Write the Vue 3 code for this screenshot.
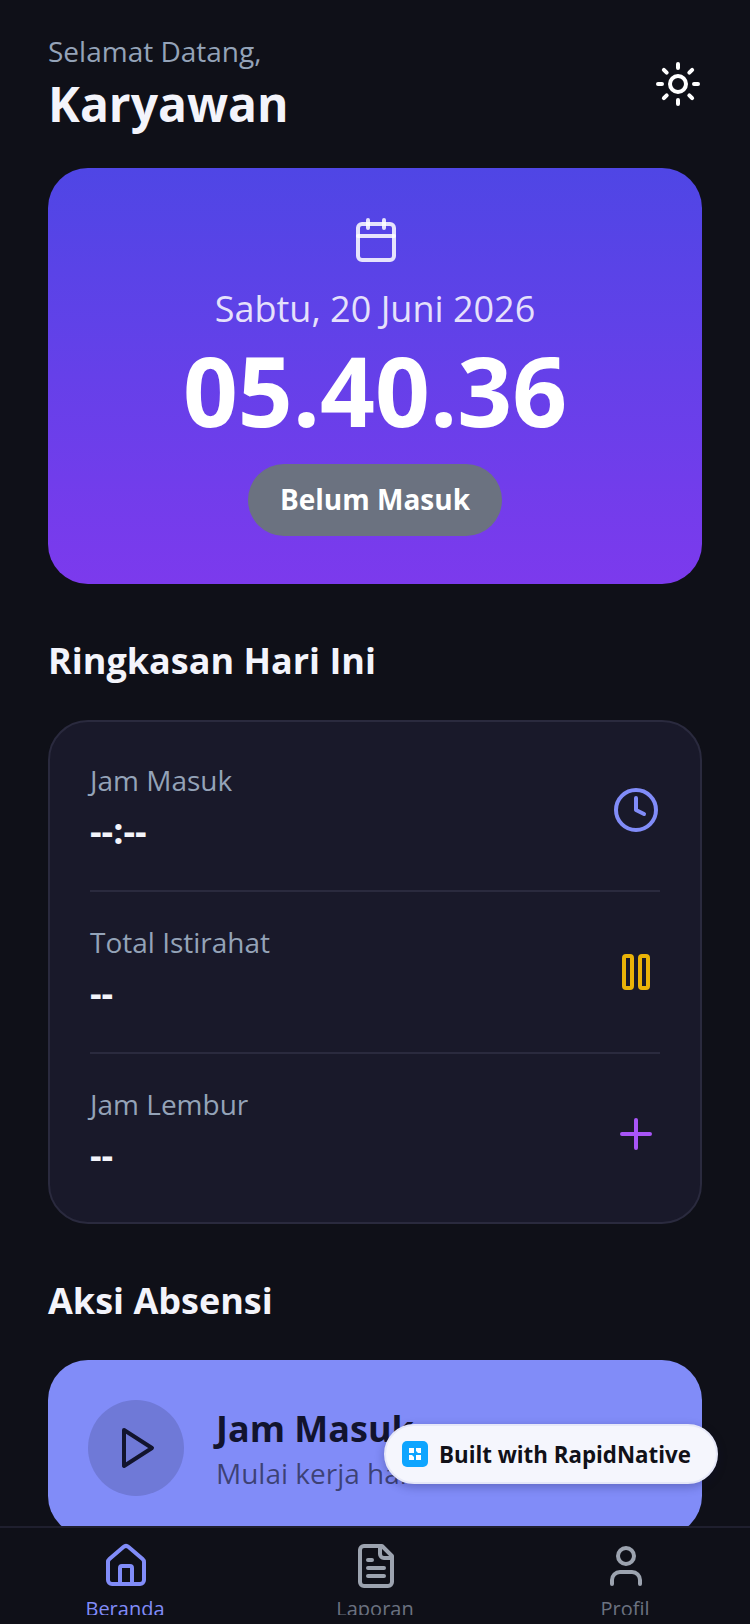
<script setup>
const summary = [
  { label: "Jam Masuk", value: "--:--", icon: "clock" },
  { label: "Total Istirahat", value: "--", icon: "pause" },
  { label: "Jam Lembur", value: "--", icon: "plus" },
];
</script>

<template>
  <div class="page">
    <main class="scroll">
      <header class="header">
        <div>
          <p class="greeting">Selamat Datang,</p>
          <h1 class="name">Karyawan</h1>
        </div>
        <svg class="icon sun" viewBox="0 0 24 24">
          <circle cx="12" cy="12" r="4" />
          <path d="M12 2v2M12 20v2M4.93 4.93l1.41 1.41M17.66 17.66l1.41 1.41M2 12h2M20 12h2M6.34 17.66l-1.41 1.41M19.07 4.93l-1.41 1.41" />
        </svg>
      </header>

      <section class="hero">
        <svg class="icon calendar" viewBox="0 0 24 24">
          <path d="M8 2v4M16 2v4" />
          <rect x="3" y="4" width="18" height="18" rx="2" />
          <path d="M3 10h18" />
        </svg>
        <p class="date">Sabtu, 20 Juni 2026</p>
        <p class="time">05.40.36</p>
        <div class="status">Belum Masuk</div>
      </section>

      <h2 class="section-title">Ringkasan Hari Ini</h2>
      <section class="summary">
        <div v-for="item in summary" :key="item.label" class="row">
          <div class="row-text">
            <p class="row-label">{{ item.label }}</p>
            <p class="row-value">{{ item.value }}</p>
          </div>
          <svg v-if="item.icon === 'clock'" class="icon clock" viewBox="0 0 24 24">
            <circle cx="12" cy="12" r="10" />
            <path d="M12 6v6l4 2" />
          </svg>
          <svg v-else-if="item.icon === 'pause'" class="icon pause" viewBox="0 0 24 24">
            <rect x="6" y="4" width="4" height="16" rx="1" />
            <rect x="14" y="4" width="4" height="16" rx="1" />
          </svg>
          <svg v-else class="icon plus" viewBox="0 0 24 24">
            <path d="M12 5v14M5 12h14" />
          </svg>
        </div>
      </section>

      <h2 class="section-title">Aksi Absensi</h2>
      <button class="action">
        <span class="action-circle">
          <svg class="icon play" viewBox="0 0 24 24">
            <path d="M5 3l14 9-14 9V3z" />
          </svg>
        </span>
        <span class="action-text">
          <span class="action-title">Jam Masuk</span>
          <span class="action-sub">Mulai kerja hari ini</span>
        </span>
      </button>
    </main>

    <nav class="tabbar">
      <div class="tab active">
        <svg class="icon" viewBox="0 0 24 24">
          <path d="M15 21v-8a1 1 0 0 0-1-1h-4a1 1 0 0 0-1 1v8" />
          <path d="M3 10a2 2 0 0 1 .709-1.528l7-6a2 2 0 0 1 2.582 0l7 6A2 2 0 0 1 21 10v9a2 2 0 0 1-2 2H5a2 2 0 0 1-2-2z" />
        </svg>
        <span>Beranda</span>
      </div>
      <div class="tab">
        <svg class="icon" viewBox="0 0 24 24">
          <path d="M15 2H6a2 2 0 0 0-2 2v16a2 2 0 0 0 2 2h12a2 2 0 0 0 2-2V7Z" />
          <path d="M14 2v4a2 2 0 0 0 2 2h4" />
          <path d="M10 9H8M16 13H8M16 17H8" />
        </svg>
        <span>Laporan</span>
      </div>
      <div class="tab">
        <svg class="icon" viewBox="0 0 24 24">
          <path d="M19 21v-2a4 4 0 0 0-4-4H9a4 4 0 0 0-4 4v2" />
          <circle cx="12" cy="7" r="4" />
        </svg>
        <span>Profil</span>
      </div>
    </nav>

    <div class="built">
      <svg class="built-logo" viewBox="0 0 26 26">
        <rect width="26" height="26" rx="5" fill="#0ea5ff" />
        <path d="M7 7h5v5H7zM14 7h5v5h-3l-2-2zM7 14h3l2 2v3H7zM14 14h5v5h-5z" fill="#fff" />
      </svg>
      <span>Built with RapidNative</span>
    </div>
  </div>
</template>

<style>
html,
body {
  margin: 0;
  background: #0f1018;
}
</style>

<style scoped>
* {
  box-sizing: border-box;
  margin: 0;
}
.page {
  position: relative;
  display: flex;
  flex-direction: column;
  width: 750px;
  height: 1624px;
  overflow: hidden;
  background: #0f1018;
  color: #f3f4fb;
  font-family: "Open Sans", "Noto Sans", sans-serif;
}
.scroll {
  flex: 1;
  min-height: 0;
  overflow: hidden;
  padding: 32px 48px 0;
}
.icon {
  flex: none;
  width: 48px;
  height: 48px;
  fill: none;
  stroke: currentColor;
  stroke-width: 2;
  stroke-linecap: round;
  stroke-linejoin: round;
}
.header {
  display: flex;
  align-items: center;
  justify-content: space-between;
  margin-bottom: 32px;
}
.greeting {
  margin-bottom: 1px;
  font-size: 28px;
  color: #94a3b8;
}
.name {
  font-size: 48px;
  font-weight: 700;
}
.sun {
  color: #fff;
}
.hero {
  display: flex;
  flex-direction: column;
  align-items: center;
  padding: 48px;
  border-radius: 40px;
  background: linear-gradient(180deg, #4f46e5, #7c3aed);
  color: #fff;
}
.calendar {
  margin-left: 2px;
  color: rgba(255, 255, 255, 0.85);
}
.date {
  margin-top: 20px;
  font-size: 36px;
  color: rgba(255, 255, 255, 0.85);
}
.time {
  margin-top: 1px;
  font-size: 96px;
  font-weight: 700;
  line-height: 112px;
}
.status {
  margin-top: 18px;
  padding: 16px 32px 18px;
  border-radius: 36px;
  background: #6b7280;
  font-size: 28px;
  font-weight: 700;
}
.section-title {
  margin: 52px 0 35px;
  font-size: 36px;
  font-weight: 700;
}
.summary {
  padding: 8px 40px;
  border: 2px solid #2a2a3e;
  border-radius: 40px;
  background: #19192a;
}
.row {
  display: flex;
  align-items: center;
  justify-content: space-between;
  height: 162px;
  border-bottom: 2px solid #2a2a3e;
}
.row:last-child {
  height: 160px;
  border-bottom: 0;
}
.row-text {
  padding-bottom: 4px;
}
.row-label {
  font-size: 28px;
  color: #94a3b8;
}
.row-value {
  margin-top: 7px;
  font-size: 36px;
  font-weight: 700;
}
.clock {
  color: #818cf8;
}
.pause {
  color: #eab308;
}
.plus {
  color: #a855f7;
}
.action {
  display: flex;
  align-items: center;
  gap: 32px;
  width: 100%;
  padding: 40px;
  border: 0;
  border-radius: 40px;
  background: #818cf8;
  color: #12142e;
  font-family: inherit;
  text-align: left;
}
.action-circle {
  display: flex;
  flex: none;
  align-items: center;
  justify-content: center;
  width: 96px;
  height: 96px;
  border-radius: 50%;
  background: rgba(15, 15, 26, 0.15);
}
.play {
  margin-left: 3px;
}
.action-text {
  display: flex;
  flex-direction: column;
}
.action-title {
  font-size: 36px;
  font-weight: 700;
}
.action-sub {
  margin-top: 1px;
  font-size: 28px;
  color: rgba(15, 15, 26, 0.6);
}
.tabbar {
  display: flex;
  flex: none;
  height: 98px;
  padding: 14px 0 9px;
  border-top: 2px solid #1f1f2e;
  background: #0f1018;
  overflow: hidden;
}
.tab {
  display: flex;
  flex: 1;
  flex-direction: column;
  align-items: center;
  gap: 5px;
  overflow: hidden;
  font-size: 20px;
  color: #6b7280;
}
.tab .icon {
  margin-left: 2px;
  color: #9ca3af;
}
.tab.active,
.tab.active .icon {
  color: #818cf8;
}
.built {
  position: absolute;
  top: 1424px;
  left: 384px;
  display: flex;
  align-items: center;
  gap: 11px;
  width: 334px;
  height: 60px;
  padding-left: 16px;
  border: 2px solid #e6e8f8;
  border-radius: 30px;
  background: #f5f6fd;
  box-shadow: 0 3px 10px rgba(15, 15, 60, 0.28);
  color: #111118;
  font-size: 22.3px;
  font-weight: 700;
}
.built-logo {
  flex: none;
  width: 26px;
  height: 26px;
}
</style>
